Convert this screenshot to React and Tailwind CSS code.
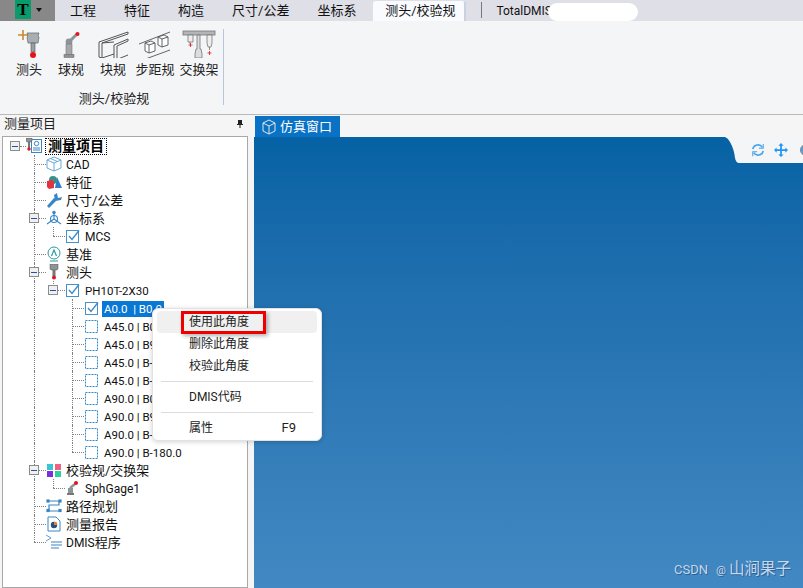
const tabs = ['工程', '特征', '构造', '尺寸/公差', '坐标系'];

const ProbeIcon = () => (
    <svg viewBox="0 0 32 32" className="w-8 h-8">
        <path d="M10 4v10M5 9h10" stroke="#c98a2c" strokeWidth="1.6" fill="none" />
        <path d="M14 7h12l-1 3 1 1-1 6H15l-1-6 1-1z" fill="#a9aeb2" stroke="#6d7276" strokeWidth="0.8" />
        <rect x="18" y="17" width="4" height="9" fill="#9a9fa3" stroke="#555" strokeWidth="0.6" />
        <circle cx="20" cy="29" r="3" fill="#e3141c" />
    </svg>
);

const BallIcon = () => (
    <svg viewBox="0 0 32 32" className="w-8 h-8">
        <path d="M14 16l8-8" stroke="#8e9397" strokeWidth="3" />
        <circle cx="14" cy="16" r="3.4" fill="#8e9397" />
        <path d="M11 18h6v11h-6z" fill="#a4a8ab" stroke="#777" strokeWidth="0.6" />
        <rect x="9" y="28.5" width="10" height="3" fill="#8e9397" stroke="#666" strokeWidth="0.5" />
        <circle cx="22.5" cy="8" r="2" fill="#e3141c" />
    </svg>
);

const BlockIcon = () => (
    <svg viewBox="0 0 32 32" className="w-8 h-8" fill="none" stroke="#555" strokeWidth="1">
        <path d="M2 16L31 6v2L5 17v15l-3-1z" />
        <path d="M5 17l12-1M5 32l12-4" />
        <path d="M17 19l14-6v2L20 20v14l-3-1z" />
        <path d="M21 33l10-4" />
    </svg>
);

const StepIcon = () => (
    <svg viewBox="0 0 32 32" className="w-8 h-8" fill="none" stroke="#555" strokeWidth="0.9">
        <path d="M0 18L31 6M1 35L31 24" />
        <path d="M6 17l6-2 4 2v8l-6 2-4-2zM6 17l4 2 6-2M10 19v8" fill="#fff" />
        <path d="M19 11l6-2 4 2v8l-6 2-4-2zM19 11l4 2 6-2M23 13v8" fill="#fff" />
    </svg>
);

const RackIcon = () => (
    <svg viewBox="0 0 36 32" className="w-9 h-8" fill="none" stroke="#777" strokeWidth="0.8">
        <rect x="2" y="5" width="32" height="4" fill="#b5b5b5" />
        <path d="M7 9h5v7H7zM9 16v2M26 9h5v8l-1 4h-3l-1-4zM28.5 21v3" fill="#eee" />
        <path d="M16 9h3v14h1l1 5v4h-7v-4l1-5h1z" fill="#ddd" />
        <path d="M9.5 17v4M7.5 19h4M28.5 25v4M26.5 27h4" stroke="#e3141c" />
    </svg>
);

const ribbon = [
    { label: '测头', Icon: ProbeIcon },
    { label: '球规', Icon: BallIcon },
    { label: '块规', Icon: BlockIcon },
    { label: '步距规', Icon: StepIcon },
    { label: '交换架', Icon: RackIcon },
];

const Check = () => (
    <svg viewBox="0 0 16 16" className="w-4 h-4" fill="none">
        <rect x="1.5" y="2.5" width="12" height="12" stroke="#4a90c8" />
        <path d="M4 8l3 3.5L14 2.5" stroke="#3c8ccb" strokeWidth="1.4" />
    </svg>
);

const Dashed = () => (
    <svg viewBox="0 0 16 16" className="w-4 h-4" fill="none">
        <rect x="1.5" y="2.5" width="12" height="12" stroke="#2f86c8" strokeDasharray="2 1" />
    </svg>
);

const Cad = () => (
    <svg viewBox="0 0 16 16" className="w-4 h-4" fill="none" stroke="#5a9fd0" strokeWidth="0.9">
        <path d="M8 1l7 3v8l-7 3-7-3V4zM1 4l7 3 7-3M8 7v8M4.5 2.5l7 3" />
    </svg>
);

const Feature = () => (
    <svg viewBox="0 0 16 16" className="w-4 h-4">
        <path d="M11 3l5 11H9z" fill="#2a7fd0" />
        <circle cx="7" cy="6" r="4" fill="#3c8f86" />
        <path d="M1 7l5-1 2 2v6l-5 1-2-2z" fill="#e2343f" />
    </svg>
);

const Caliper = () => (
    <svg viewBox="0 0 16 16" className="w-4 h-4" fill="#3a86c4">
        <path d="M1 14l7-8 3 2-8 8z" />
        <path d="M8 3l3-2 1 5 4-1-1 3-6 1z" />
    </svg>
);

const Axes = () => (
    <svg viewBox="0 0 16 16" className="w-4 h-4" fill="none" stroke="#3a86c4" strokeWidth="1.1">
        <circle cx="8" cy="9" r="3.5" />
        <path d="M8 1v8M8 9l-7 5M8 9l7 5" />
        <circle cx="8" cy="2.5" r="1.2" fill="#3a86c4" />
    </svg>
);

const Datum = () => (
    <svg viewBox="0 0 16 16" className="w-4 h-4" fill="none" stroke="#2a9aa0">
        <circle cx="8" cy="7" r="6" />
        <path d="M5.5 10L8 4l2.5 6M4 15h8" strokeWidth="1.2" />
    </svg>
);

const SmallProbe = () => (
    <svg viewBox="0 0 16 16" className="w-4 h-4">
        <path d="M4 0h8v5l-1 1H5L4 5z" fill="#8f9396" stroke="#555" strokeWidth="0.5" />
        <rect x="6.5" y="6" width="3" height="6" fill="#777" />
        <circle cx="8" cy="13.5" r="2" fill="#e3141c" />
    </svg>
);

const RootIcon = () => (
    <svg viewBox="0 0 16 16" className="w-4 h-4">
        <rect x="5.5" y="1.5" width="10" height="13" fill="#fff" stroke="#3a86c4" />
        <path d="M7 10h7M7 12h7" stroke="#3a86c4" />
        <circle cx="10.5" cy="5.5" r="2.2" fill="none" stroke="#3a86c4" />
        <path d="M0 0h6v3l-1 1H1L0 3z" fill="#8f9396" stroke="#555" strokeWidth="0.5" />
        <rect x="2" y="4" width="2" height="6" fill="#777" />
        <circle cx="3" cy="11" r="1.7" fill="#e3141c" />
    </svg>
);

const Squares = () => (
    <svg viewBox="0 0 16 16" className="w-4 h-4">
        <rect x="1" y="2" width="6" height="6" fill="#35c7d4" />
        <rect x="9" y="2" width="6" height="6" fill="#f0607f" />
        <rect x="1" y="9" width="6" height="6" fill="#7a2ee0" />
        <rect x="9" y="9" width="6" height="6" fill="#2ed0a0" />
    </svg>
);

const PathIcon = () => (
    <svg viewBox="0 0 16 16" className="w-4 h-4" fill="none" stroke="#3a86c4" strokeWidth="1.2">
        <path d="M3 3h10M13 3v4H3v6h10" />
        <rect x="1" y="2" width="2" height="2" fill="#3a86c4" />
        <rect x="13" y="2" width="2" height="2" fill="#3a86c4" />
        <rect x="1" y="11.5" width="2" height="2" fill="#3a86c4" />
        <rect x="13" y="11.5" width="2" height="2" fill="#3a86c4" />
    </svg>
);

const Report = () => (
    <svg viewBox="0 0 16 16" className="w-4 h-4">
        <path d="M2 1h8l4 4v10H2z" fill="#fff" stroke="#3a86c4" />
        <circle cx="8" cy="9" r="3.2" fill="#24507a" />
        <path d="M8 9V5.8A3.2 3.2 0 0 1 11.2 9z" fill="#e8803a" />
    </svg>
);

const Program = () => (
    <svg viewBox="0 0 16 16" className="w-4 h-4" fill="none" stroke="#3a86c4" strokeWidth="1.1">
        <path d="M0 1l5 3-5 3" strokeWidth="0.8" />
        <path d="M5 8h11M5 11h11M5 14h8" />
    </svg>
);

const Gage = () => (
    <svg viewBox="0 0 16 16" className="w-4 h-4">
        <path d="M5 8l5-4" stroke="#8e9397" strokeWidth="2.4" />
        <path d="M3 8h5v6H3z" fill="#8e9397" />
        <rect x="2" y="13" width="7" height="2" fill="#777" />
        <circle cx="11" cy="3" r="2" fill="#e3141c" />
    </svg>
);

const Expander = ({ className }) => (
    <div className={`absolute w-[10px] h-[10px] border border-[#8c8c8c] bg-[#f0f0f0] flex items-center justify-center ${className}`}>
        <div className="w-[6px] h-px bg-[#2b4fa8]" />
    </div>
);

// tree rows: col = dotted guides that keep running through this row
const rows = [
    { level: 1, label: 'CAD', size: 'text-[12px]', Icon: Cad, col: [] },
    { level: 1, label: '特征', Icon: Feature, col: [] },
    { level: 1, label: '尺寸/公差', Icon: Caliper, col: [] },
    { level: 1, label: '坐标系', Icon: Axes, col: [], open: true },
    { level: 2, label: 'MCS', size: 'text-[12px]', Icon: Check, col: [true], last: true },
    { level: 1, label: '基准', Icon: Datum, col: [] },
    { level: 1, label: '测头', Icon: SmallProbe, col: [], open: true },
    { level: 2, label: 'PH10T-2X30', size: 'text-[11.5px]', Icon: Check, col: [true], open: true, last: true },
    { level: 3, label: 'A0.0  | B0.0', size: 'text-[11.5px]', Icon: Check, col: [true, false], selected: true },
    { level: 3, label: 'A45.0 | B0.0', size: 'text-[11.5px]', Icon: Dashed, col: [true, false] },
    { level: 3, label: 'A45.0 | B90.0', size: 'text-[11.5px]', Icon: Dashed, col: [true, false] },
    { level: 3, label: 'A45.0 | B-90.0', size: 'text-[11.5px]', Icon: Dashed, col: [true, false] },
    { level: 3, label: 'A45.0 | B-180.0', size: 'text-[11.5px]', Icon: Dashed, col: [true, false] },
    { level: 3, label: 'A90.0 | B0.0', size: 'text-[11.5px]', Icon: Dashed, col: [true, false] },
    { level: 3, label: 'A90.0 | B90.0', size: 'text-[11.5px]', Icon: Dashed, col: [true, false] },
    { level: 3, label: 'A90.0 | B-90.0', size: 'text-[11.5px]', Icon: Dashed, col: [true, false] },
    { level: 3, label: 'A90.0 | B-180.0', size: 'text-[11.5px]', Icon: Dashed, col: [true, false], last: true },
    { level: 1, label: '校验规/交换架', Icon: Squares, col: [], open: true },
    { level: 2, label: 'SphGage1', size: 'text-[12px]', Icon: Gage, col: [true], last: true },
    { level: 1, label: '路径规划', Icon: PathIcon, col: [] },
    { level: 1, label: '测量报告', Icon: Report, col: [] },
    { level: 1, label: <><span className="text-[12px]">DMIS</span>程序</>, Icon: Program, col: [], last: true },
];

const TreeRow = ({ row }) => (
    <div className="flex items-center h-[18px] pl-[31px] whitespace-pre">
        {row.col.map((on, i) => (
            <div key={i} className={`w-[19px] h-full shrink-0 ${on ? 'border-l border-dotted border-[#808080]' : ''}`} />
        ))}
        <div className="relative w-[12px] h-full shrink-0">
            <div className={`absolute left-0 top-0 border-l border-dotted border-[#808080] ${row.last ? 'h-[9px]' : 'h-full'}`} />
            <div className="absolute left-0 top-[9px] w-full border-t border-dotted border-[#808080]" />
            {row.open && <Expander className="left-[-5px] top-[4px]" />}
        </div>
        <row.Icon />
        <span className={`leading-[16px] mt-px ${row.size || ''} ${row.selected ? 'bg-[#0878d4] text-white px-[2px] ml-[2px]' : 'ml-[4px] text-[#111]'}`}>{row.label}</span>
    </div>
);

const App = () => {
    return (
        <div className="relative w-[803px] h-[588px] overflow-hidden flex flex-col bg-[#f5f5f5] text-[13px] font-['Roboto','Noto_Sans_CJK_SC',sans-serif]">
            {/* title tabs */}
            <div className="flex h-[21px] bg-[#dfdfe7] shrink-0 text-[#111] items-stretch">
                <div className="w-[55px] bg-[#888888] flex items-start pl-[15px] gap-[5px]">
                    <div className="w-[16px] h-[19px] bg-[#0a9b6c] flex items-center justify-center text-black text-[17px] font-bold leading-none font-['Liberation_Serif',serif]">T</div>
                    <svg viewBox="0 0 6 4" className="w-[6px] h-[4px] mt-[8px]"><path d="M0 0h6L3 4z" fill="#111" /></svg>
                </div>
                <div className="flex ml-px">
                    {tabs.map((t) => (
                        <div key={t} className="px-[14px] flex items-center leading-none">{t}</div>
                    ))}
                </div>
                <div className="ml-[3px] w-[93px] pl-[3px] bg-[#f9fbff] rounded-t-[3px] border-r-2 border-[#c9d2e2] flex items-center justify-center mt-px">测头/校验规</div>
                <div className="w-px h-[16px] bg-[#777] ml-[15px] mt-[2px]" />
                <div className="ml-[14px] flex items-center text-[12px] leading-none">TotalDMIS</div>
                <div className="w-[90px] h-[18px] mt-[3px] -ml-[4px] bg-white rounded-full" />
            </div>

            {/* ribbon */}
            <div className="h-[94px] shrink-0 bg-[#f4f5f7] border-b border-[#b9b9b9] flex">
                <div className="w-[223px] flex flex-col items-center">
                    <div className="flex pl-[8px] pt-[5px] w-full">
                        {ribbon.map(({ label, Icon }, i) => (
                            <div key={label} className={`flex flex-col items-center ${i === 4 ? 'w-[42px] ml-[2px]' : 'w-[42px]'}`}>
                                <div className="h-[32px] flex justify-center"><Icon /></div>
                                <span className="mt-[3px] leading-[18px] text-[#222] whitespace-nowrap">{label}</span>
                            </div>
                        ))}
                    </div>
                    <span className="mt-[11px] ml-[5px] leading-[18px] text-[#222]">测头/校验规</span>
                </div>
                <div className="w-px h-[76px] mt-[8px] bg-[#b8c6dc]" />
            </div>

            <div className="flex-1 flex min-h-0">
                {/* project tree */}
                <div className="w-[254px] shrink-0 flex flex-col">
                    <div className="h-[21px] shrink-0 flex items-center justify-between pl-[4px] pr-[10px] pb-[4px] text-[#222] leading-none">
                        <span>测量项目</span>
                        <svg viewBox="0 0 8 8" className="w-2 h-2"><path d="M2 0h4v4h1v1H4.5v3h-1V5H1V4h1z" fill="#222" /></svg>
                    </div>
                    <div className="flex-1 ml-[2px] w-[246px] border border-[#a8a8a8] bg-white">
                        <div className="relative flex items-center h-[18px] pl-[23px]">
                            <Expander className="left-[7px] top-[4px]" />
                            <div className="absolute left-[17px] top-[9px] w-[6px] border-t border-dotted border-[#808080]" />
                            <RootIcon />
                            <span className="ml-[3px] px-[2px] h-[17px] flex items-center border border-dotted border-black font-bold text-[14px] leading-none text-black">测量项目</span>
                        </div>
                        {rows.map((row, i) => (
                            <TreeRow key={i} row={row} />
                        ))}
                    </div>
                </div>

                {/* view */}
                <div className="flex-1 flex flex-col min-w-0">
                    <div className="h-[22px] shrink-0 flex items-end pl-px">
                        <div className="w-[85px] h-[21px] bg-[#0a72c4] flex items-center pl-[6px] gap-[3px] text-white leading-none">
                            <svg viewBox="0 0 16 16" className="w-4 h-4" fill="none" stroke="#e6e6e6" strokeWidth="1">
                                <path d="M8 1l6 3v8l-6 3-6-3V4zM2 4l6 3 6-3M8 7v8" />
                            </svg>
                            <span>仿真窗口</span>
                        </div>
                    </div>
                    <div className="relative flex-1 bg-linear-to-b from-[#0562a4] to-[#4289c3]">
                        <div className="absolute top-0 right-0 w-[78px] h-[26px]">
                            <svg viewBox="0 0 78 26" className="absolute inset-0 w-full h-full">
                                <path d="M0 0h78v26H14Q11 26 10 21 9 12 5 5 3 1 0 0z" fill="#f4f5f7" />
                            </svg>
                            <svg viewBox="0 0 16 16" className="absolute left-[26px] top-[6px] w-[14px] h-[14px]" fill="none" stroke="#4aa3e8" strokeWidth="1.8">
                                <path d="M2 7a6 6 0 0 1 11-2M14 9a6 6 0 0 1-11 2" />
                                <path d="M14 1v5H9M2 15v-5h5" strokeWidth="1.2" />
                            </svg>
                            <svg viewBox="0 0 16 16" className="absolute left-[49px] top-[6px] w-[14px] h-[14px]" fill="#2196f3">
                                <path d="M8 0l3 3H9v4h4V5l3 3-3 3V9H9v4h2l-3 3-3-3h2V9H3v2L0 8l3-3v2h4V3H5z" />
                            </svg>
                            <div className="absolute left-[75px] top-[7px] w-[12px] h-[12px] rounded-full bg-[#5c9fd8] border border-[#888]" />
                        </div>
                        <div className="absolute right-[12px] bottom-[7px] flex items-baseline leading-[20px] text-[#c5d8ea] whitespace-nowrap [text-shadow:1px_1px_0_rgba(30,70,120,0.6)]">
                            <span className="text-[13px]">CSDN</span>
                            <span className="text-[11px] ml-[8px] mr-[3px]">@</span>
                            <span className="text-[15.5px]">山涧果子</span>
                        </div>
                    </div>
                </div>
            </div>

            {/* context menu */}
            <div className="absolute left-[152px] top-[308px] w-[170px] h-[133px] bg-white rounded-[6px] border border-[#e2e2e2] shadow-[0_1px_5px_rgba(0,0,0,0.18)] pt-[2px] px-[4px] text-[12px] text-[#222]">
                <div className="h-[22px] rounded-[4px] bg-[#f0f0f0] flex items-center pl-[32px]">使用此角度</div>
                <div className="h-[22px] flex items-center pl-[32px]">删除此角度</div>
                <div className="h-[22px] flex items-center pl-[32px]">校验此角度</div>
                <div className="h-px bg-[#dcdcdc] mt-[4px] mx-[4px]" />
                <div className="h-[22px] mt-[4px] flex items-center pl-[32px]">DMIS代码</div>
                <div className="h-px bg-[#dcdcdc] mt-[4px] mx-[4px]" />
                <div className="h-[22px] mt-[4px] flex items-center justify-between pl-[32px] pr-[21px]">
                    <span>属性</span>
                    <span className="text-[13px]">F9</span>
                </div>
                <div className="absolute left-[28px] top-[2px] w-[85px] h-[23px] border-[3px] border-[#ee0000] shadow-[2px_2px_4px_rgba(0,0,0,0.3)]" />
            </div>
        </div>
    );
};

export default App;
